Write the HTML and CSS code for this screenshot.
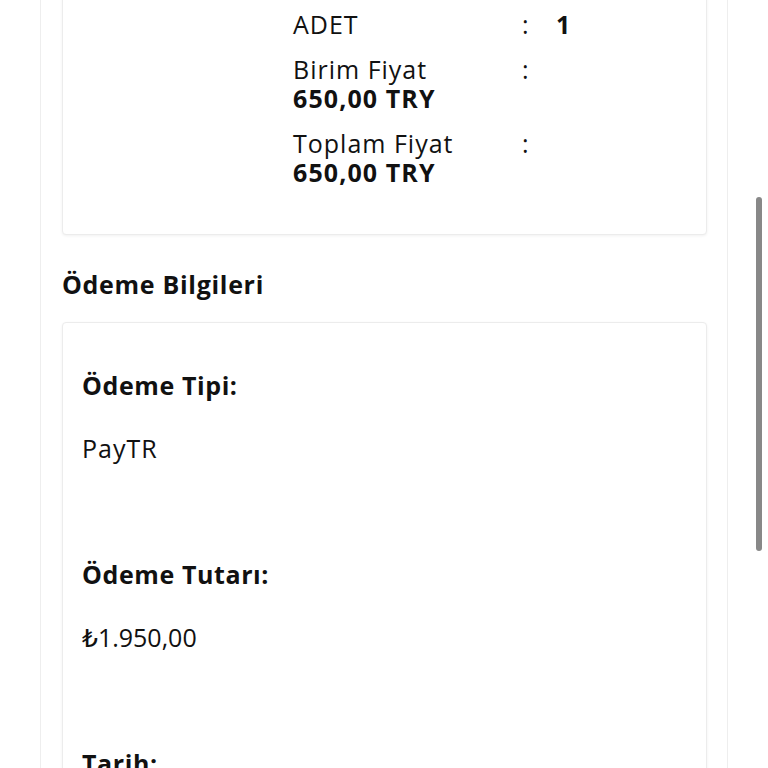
FILE: index.html
```html
<!DOCTYPE html>
<html lang="tr">
<head>
<meta charset="utf-8">
<title>Sipariş Detayı</title>
<link rel="stylesheet" href="styles.css">
</head>
<body>
<div class="page">
  <div class="card card-items">
    <div class="item-info">
      <div class="row">
        <div class="label">ADET</div>
        <div class="colon">:</div>
        <div class="value strong">1</div>
      </div>
      <div class="row">
        <div class="label">Birim Fiyat<div class="strong">650,00 TRY</div></div>
        <div class="colon">:</div>
        <div class="value"></div>
      </div>
      <div class="row">
        <div class="label">Toplam Fiyat<div class="strong">650,00 TRY</div></div>
        <div class="colon">:</div>
        <div class="value"></div>
      </div>
    </div>
  </div>

  <h2 class="section-title">Ödeme Bilgileri</h2>

  <div class="card card-payment">
    <div class="field">
      <h3 class="field-title">Ödeme Tipi:</h3>
      <p class="field-value">PayTR</p>
    </div>
    <div class="field">
      <h3 class="field-title">Ödeme Tutarı:</h3>
      <p class="field-value amount">₺1.950,00</p>
    </div>
    <div class="field">
      <h3 class="field-title">Tarih:</h3>
      <p class="field-value">12.03.2024</p>
    </div>
  </div>
</div>
<div class="scrollbar"></div>
</body>
</html>
```

FILE: styles.css
```css
html, body {
  margin: 0;
  padding: 0;
  background: #fff;
  overflow: hidden;
}
body {
  font-family: "Open Sans", "DejaVu Sans", sans-serif;
  color: #111;
  font-size: 25px;
  letter-spacing: 1px;
}
.page {
  margin: 0 40px;
  border-left: 1px solid #eee;
  border-right: 1px solid #eee;
  padding: 0 20px 0 21px;
  min-height: 900px;
}
.card {
  background: #fff;
  border: 1px solid #ececec;
  border-radius: 4px;
  box-shadow: 0 1px 3px rgba(0, 0, 0, 0.06);
}
.card-items {
  margin-top: -12px;
  padding: 21px 0 47px 230px;
}
.item-info {
  display: flex;
  flex-direction: column;
  gap: 16px;
}
.row {
  display: grid;
  grid-template-columns: 229px 34px auto;
  line-height: 29px;
}
.label { font-weight: 400; }
.colon { font-weight: 400; }
.strong { font-weight: 700; letter-spacing: 1.1px; }
.section-title {
  margin: 34px 0 23px;
  font-size: 25px;
  line-height: 30px;
  font-weight: 700;
  letter-spacing: 0.7px;
}
.card-payment {
  padding: 47px 19px 40px;
}
.field + .field {
  margin-top: 96px;
}
.field-title {
  margin: 0;
  font-size: 25px;
  line-height: 30px;
  font-weight: 700;
  letter-spacing: 0.6px;
}
.field-value {
  margin: 33px 0 0;
  font-size: 25px;
  line-height: 30px;
  font-weight: 400;
}
.amount {
  letter-spacing: 0;
}
.scrollbar {
  position: fixed;
  top: 197px;
  left: 756px;
  width: 6px;
  height: 354px;
  border-radius: 3px;
  background: #888;
}
```
